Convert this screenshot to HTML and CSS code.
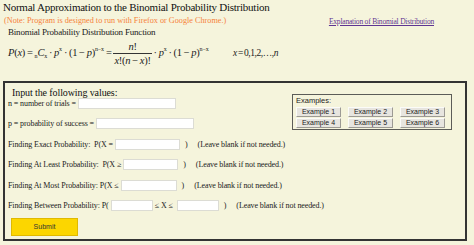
FILE: index.html
```html
<!DOCTYPE html>
<html>
<head>
<meta charset="utf-8">
<title>Normal Approximation to the Binomial Probability Distribution</title>
<link rel="stylesheet" href="styles.css">
</head>
<body>
<h1 class="title">Normal Approximation to the Binomial Probability Distribution</h1>
<div class="noteRow">
  <span class="note">(Note: Program is designed to run with Firefox or Google Chrome.)</span>
  <a class="explain" href="#">Explanation of Binomial Distribution</a>
</div>
<div class="subtitle">Binomial Probability Distribution Function</div>
<div class="formula">
  <span class="expr"><i>P</i>(<i>x</i>) = <sub class="pre">n</sub><i>C</i><sub>x</sub> · <i>p</i><sup>x</sup> · (1 − <i>p</i>)<sup>n−x</sup> = <span class="frac"><span class="num"><i>n</i>!</span><span class="den"><i>x</i>!(<i>n</i> − <i>x</i>)!</span></span> · <i>p</i><sup>x</sup> · (1 − <i>p</i>)<sup>n−x</sup></span>
  <span class="range"><i>x</i> = 0,1,2,…,<i>n</i></span>
</div>

<form class="panel" onsubmit="return false;">
  <fieldset class="examples">
    <div class="exLabel">Examples:</div>
    <div class="exGrid">
      <button type="button" class="exBtn">Example 1</button>
      <button type="button" class="exBtn">Example 2</button>
      <button type="button" class="exBtn">Example 3</button>
      <button type="button" class="exBtn">Example 4</button>
      <button type="button" class="exBtn">Example 5</button>
      <button type="button" class="exBtn">Example 6</button>
    </div>
  </fieldset>
  <div class="heading">Input the following values:</div>
  <div class="rows">
    <div class="row">n = number of trials =<input class="field wide" type="text"></div>
    <div class="row">p = probability of success =<input class="field wide" type="text"></div>
    <div class="row">Finding Exact Probability:&nbsp; P(X =<input class="field w65" type="text"><span class="close">)</span><span class="hint">(Leave blank if not needed.)</span></div>
    <div class="row">Finding At Least Probability:&nbsp; P(X ≥<input class="field w55" type="text"><span class="close">)</span><span class="hint">(Leave blank if not needed.)</span></div>
    <div class="row">Finding At Most Probability: P(X ≤<input class="field w56" type="text"><span class="close">)</span><span class="hint">(Leave blank if not needed.)</span></div>
    <div class="row">Finding Between Probability: P(<input class="field w42" type="text"><span class="between">≤ X ≤</span><input class="field w42" type="text"><span class="close">)</span><span class="hint">(Leave blank if not needed.)</span></div>
  </div>
  <button type="submit" class="submit">Submit</button>
</form>
</body>
</html>
```

FILE: styles.css
```css
html, body {
  margin: 0;
  padding: 0;
  background: #f5f4dc;
}

body {
  font-family: "Liberation Serif", "Times New Roman", serif;
  color: #111;
  width: 474px;
  height: 245px;
  overflow: hidden;
}

.title {
  margin: 0;
  padding: 1px 0 0 3px;
  font-size: 11px;
  line-height: 13px;
  font-weight: normal;
  letter-spacing: -0.25px;
  color: #111;
}

.noteRow {
  display: flex;
  align-items: baseline;
  margin-top: 2px;
  height: 10px;
  padding-left: 4px;
}

.note {
  font-size: 8.2px;
  line-height: 10px;
  color: #f5823a;
  letter-spacing: 0;
}

.explain {
  margin-left: auto;
  margin-right: 40px;
  position: relative;
  top: 1px;
  font-size: 7.5px;
  line-height: 10px;
  letter-spacing: -0.2px;
  color: #5e3592;
}

.subtitle {
  margin-top: 1px;
  padding-left: 8px;
  font-size: 9px;
  line-height: 11px;
  letter-spacing: -0.2px;
  color: #222;
}

.formula {
  display: flex;
  align-items: center;
  height: 30px;
  padding-left: 8px;
  font-size: 10.5px;
  white-space: nowrap;
  color: #222;
}

.expr {
  letter-spacing: -0.25px;
  word-spacing: -0.5px;
}

.formula i {
  font-style: italic;
}

.formula sub,
.formula sup {
  font-size: 6px;
  line-height: 0;
  letter-spacing: -0.1px;
}

.formula sup {
  vertical-align: 5px;
}

.formula sub {
  vertical-align: -2px;
}

.frac {
  display: inline-flex;
  flex-direction: column;
  align-items: center;
  vertical-align: middle;
  line-height: 11px;
}

.frac .num {
  padding: 0 1px 1px;
}

.frac .den {
  border-top: 1px solid #333;
  padding: 1px 1px 0;
}

.range {
  margin-left: auto;
  margin-right: 196px;
  font-size: 9.5px;
  letter-spacing: -0.45px;
  word-spacing: -0.8px;
}

.panel {
  margin: 13px 0 0 3px;
  width: 464px;
  height: 160px;
  box-sizing: border-box;
  border: 2px solid #333;
  padding: 4px 0 3px 3px;
}

.examples {
  float: right;
  margin: 7px 13px 0 0;
  padding: 0 6px 1px 3px;
  border: 1px solid #5c5c58;
  min-width: 0;
}

.exLabel {
  font-family: "Liberation Sans", Arial, sans-serif;
  font-size: 7.5px;
  line-height: 12px;
  color: #222;
}

.exGrid {
  display: grid;
  grid-template-columns: repeat(3, 45px);
  grid-auto-rows: 10px;
  column-gap: 7px;
  row-gap: 1px;
}

.exBtn {
  margin: 0;
  padding: 0;
  font-family: "Liberation Sans", Arial, sans-serif;
  font-size: 7px;
  line-height: 8px;
  color: #222;
  background: #e7e5df;
  border: 1px solid;
  border-color: #fbfbf8 #9c9a94 #9c9a94 #fbfbf8;
}

.heading {
  padding-left: 4px;
  font-size: 10px;
  line-height: 11px;
  letter-spacing: -0.1px;
}

.rows {
  display: flex;
  flex-direction: column;
  gap: 9.4px;
}

.row {
  display: flex;
  align-items: center;
  height: 11px;
  font-size: 8px;
  letter-spacing: -0.1px;
  white-space: nowrap;
  color: #222;
}

.field {
  box-sizing: border-box;
  height: 11px;
  margin: 0 0 0 2px;
  padding: 0;
  border: 1px solid #dcdcd4;
  background: #fff;
}

.field.wide { width: 98px; }
.field.w65 { width: 65px; }
.field.w55 { width: 55px; }
.field.w56 { width: 56px; }
.field.w42 { width: 42px; }

.close {
  margin-left: 5px;
}

.hint {
  margin-left: 10px;
}

.between {
  margin: 0 2px 0 2px;
}

.submit {
  display: block;
  margin: 7px 0 0 3px;
  width: 67px;
  height: 18px;
  padding: 0;
  font-family: "Liberation Sans", Arial, sans-serif;
  font-size: 7px;
  color: #333;
  background: #fcd600;
  border: 1px solid #e0b900;
}
```
